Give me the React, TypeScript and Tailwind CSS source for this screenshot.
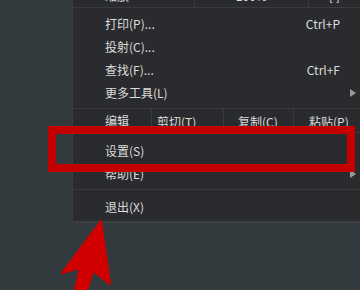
const font = { fontFamily: '"Microsoft YaHei", "Noto Sans CJK SC", "Liberation Sans", sans-serif' };

function Arrow() {
  return (
    <svg width="8" height="8" viewBox="0 0 8 8" className="fill-[#9a9a9a]">
      <path d="M1 0 L7 4 L1 8 Z" />
    </svg>
  );
}

function Item({ label, shortcut, sub }: { label: string; shortcut?: string; sub?: boolean }) {
  return (
    <div className="flex h-[23px] items-center">
      <span className="flex-1 pl-8">{label}</span>
      {shortcut && <span>{shortcut}</span>}
      <span className="flex w-8 pl-[9px]">{sub && <Arrow />}</span>
    </div>
  );
}

export default function App() {
  return (
    <div className="relative h-[290px] w-[360px] overflow-hidden bg-[#323a3d] text-[12px] text-[#dcdcdc]" style={font}>
      <div className="ml-[72px] w-[300px] border-l border-b border-[#3c3d40] bg-[#2a2b2e] shadow-[0_1px_0_#3e3f42]">
        {/* zoom row, cut off at top */}
        <div className="-mt-[16px] flex h-[24px] items-center border-b border-[#3a3b3e]">
          <span className="w-[121px] pl-8">缩放</span>
          <span className="flex w-[114px] items-center justify-between self-stretch border-l border-[#3a3b3e] px-3">
            <span>–</span>
            <span>100%</span>
            <span>+</span>
          </span>
          <span className="flex flex-1 items-center self-stretch border-l border-[#3a3b3e] pl-5">[ ]</span>
        </div>
        <div className="py-1">
          <Item label="打印(P)..." shortcut="Ctrl+P" />
          <Item label="投射(C)..." />
          <Item label="查找(F)..." shortcut="Ctrl+F" />
          <Item label="更多工具(L)" sub />
        </div>
        <div className="flex h-[25px] items-center border-t border-b border-[#3a3b3e]">
          <span className="w-[78px] pl-8">编辑</span>
          <span className="w-[72px] self-stretch border-l border-[#3a3b3e] pl-[5px] leading-[25px]">剪切(T)</span>
          <span className="w-[70px] self-stretch border-l border-[#3a3b3e] pl-[14px] leading-[25px]">复制(C)</span>
          <span className="flex-1 self-stretch border-l border-[#3a3b3e] pl-[15px] leading-[25px]">粘贴(P)</span>
        </div>
        <div className="pt-[6px] pb-1">
          <Item label="设置(S)" />
          <Item label="帮助(E)" sub />
        </div>
        <div className="border-t border-[#3a3b3e] pt-[5px] pb-[3px]">
          <Item label="退出(X)" />
        </div>
      </div>

      {/* red highlight box */}
      <div className="absolute left-[48px] top-[126px] h-[46px] w-[307px] border-[8px] border-[#c40000] blur-[0.4px]" />

      {/* red arrow */}
      <svg className="absolute left-0 top-0" width="360" height="290" viewBox="0 0 360 290">
        <polygon
          points="101,221 110,284 93,271 87,290 75,290 80,268 62,273"
          fill="#d00000"
          stroke="#d00000"
          strokeWidth="2"
          strokeLinejoin="round"
        />
      </svg>
    </div>
  );
}
